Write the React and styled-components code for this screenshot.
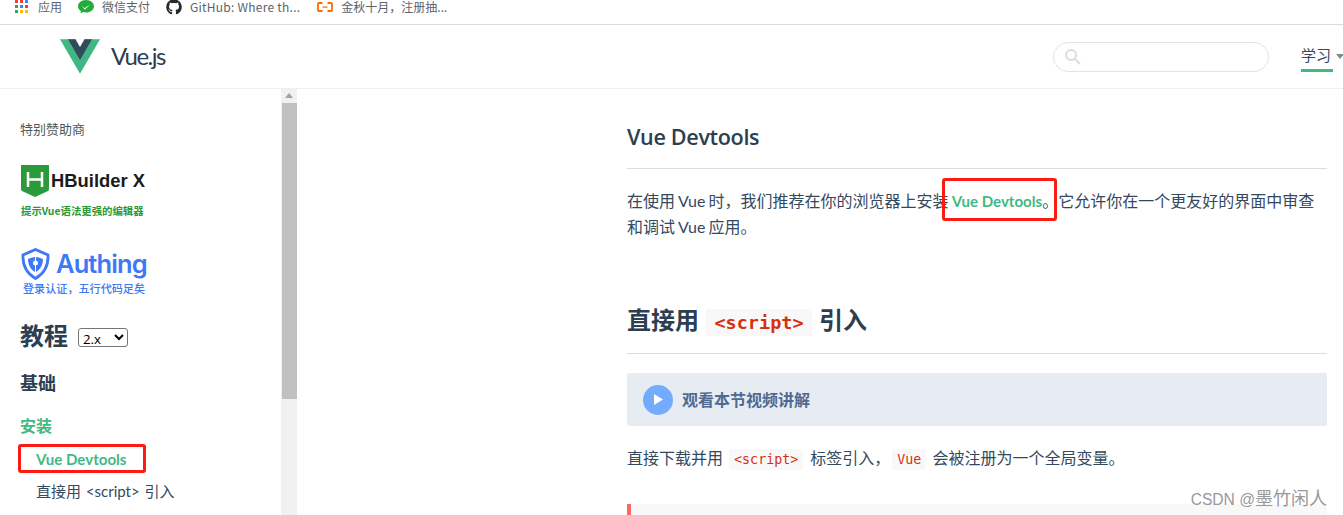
import React from "react";
import styled, { createGlobalStyle } from "styled-components";
import { FaGithub } from "react-icons/fa";

const Global = createGlobalStyle`
  html, body { margin: 0; padding: 0; height: 515px; overflow: hidden; background: #fff; }
  body { font-family: "Open Sans", "Noto Sans CJK SC", sans-serif; color: #2c3e50; }
  #root { height: 515px; }
`;
const Page = styled.div`
  height: 515px; display: flex; flex-direction: column; overflow: hidden; position: relative;
`;
const Bookmarks = styled.div`
  height: 24px; flex: none; display: flex; align-items: flex-start; padding-left: 15px;
  border-bottom: 1px solid #dadce0; box-sizing: content-box;
`;
const Bookmark = styled.div`
  display: flex; align-items: center; gap: ${p => p.$gap || 8}px; margin-right: ${p => p.$mr}px;
  font: 12px/13px "Noto Sans CJK SC", sans-serif; color: #5f6368; white-space: nowrap; height: 13px;
  letter-spacing: ${p => p.$ls || 0}px;
`;
const Header = styled.header`
  height: 64px; flex: none; box-sizing: border-box; border-bottom: 1px solid #f0f0f0;
  display: flex; align-items: center; padding-left: 60px;
`;
const Brand = styled.div`
  display: flex; align-items: center; gap: 11px; font: 400 24px Lato, sans-serif; color: #2c3e50;
  letter-spacing: -1.5px;
`;
const BrandName = styled.span`
  margin-top: -3px;
`;
const Search = styled.div`
  margin-left: auto; width: 216px; height: 30px; box-sizing: border-box; border: 1px solid #e3e3e3;
  border-radius: 15px; display: flex; align-items: center; padding-left: 10px;
`;
const NavItem = styled.div`
  width: 42px; margin-left: 32px; flex: none; font: 15px "Noto Sans CJK SC", sans-serif; position: relative;
  height: 30px; display: flex; align-items: flex-start; white-space: nowrap; overflow: hidden; line-height: 26px;
  color: #34495e;
`;
const Underline = styled.i`
  position: absolute; left: 0; bottom: 0; width: 32px; height: 3px; background: #42b983;
`;
const Caret = styled.i`
  width: 0; height: 0; border: 4px solid transparent; border-top: 5px solid #7f8c8d; border-bottom: 0; margin: 12px 0 0 5px;
`;
const Main = styled.div`
  flex: 1; min-height: 0; display: flex; overflow: hidden;
`;
const Sidebar = styled.aside`
  width: 281px; flex: none; box-sizing: border-box; padding: 32px 0 0 20px; overflow: hidden;
`;
const SponsorLabel = styled.div`
  font: 13px/16px "Noto Sans CJK SC", sans-serif; color: #4f5959;
`;
const SponsorHB = styled.div`
  margin-top: 28px; display: flex; flex-direction: column;
`;
const LogoRow = styled.div`
  display: flex; align-items: center; gap: ${p => p.$gap}px; margin-left: 1px;
`;
const HBName = styled.span`
  font: 700 18.4px/32px "Liberation Sans", sans-serif; color: #1b1b1b;
`;
const Tagline = styled.span`
  font: ${p => p.$w} ${p => p.$s}px/14px "Noto Sans CJK SC", sans-serif; color: ${p => p.$c};
  margin-top: ${p => p.$mt}px; margin-left: ${p => p.$ml || 0}px; white-space: nowrap;
`;
const SponsorAuth = styled.div`
  margin-top: 29px; display: flex; flex-direction: column;
`;
const AuthName = styled.span`
  font: 600 25.5px/34px Inter, sans-serif; color: #3f78f5; letter-spacing: -0.9px;
`;
const TutorialRow = styled.div`
  margin-top: 23px; display: flex; align-items: center; gap: 10px; height: 34px;
`;
const Big = styled.span`
  font: 700 24px/34px "Noto Sans CJK SC", sans-serif; color: #2c3e50;
`;
const Version = styled.select`
  font: 13.3px "Open Sans", sans-serif; width: 50px; height: 19px; padding: 0; margin-top: 4px;
  border: 1px solid #767676; border-radius: 3px; background: #fff; color: #000;
`;
const Sub = styled.div`
  margin-top: 18px; font: 700 18px/24px "Noto Sans CJK SC", sans-serif; color: #2c3e50;
`;
const Active = styled.div`
  margin-top: 20px; font: 700 16px/22px "Noto Sans CJK SC", sans-serif; color: #42b983;
`;
const SideLink = styled.div`
  margin: ${p => p.$mt}px 0 0 16px; position: relative; width: fit-content; line-height: 20px; height: 20px;
  font-family: Lato, "Noto Sans CJK SC", sans-serif;
  font-size: ${p => p.$active ? 15.1 : 15}px; font-weight: ${p => p.$active ? 700 : 400};
  word-spacing: ${p => p.$active ? 0 : 1}px;
  color: ${p => p.$active ? "#42b983" : "#34495e"};
`;
const RedBox = styled.span`
  position: absolute; box-sizing: border-box; border: 3px solid #fb1b10; border-radius: 3px; pointer-events: none;
  left: ${p => p.$l}px; top: ${p => p.$t}px; width: ${p => p.$w}px; height: ${p => p.$h}px;
`;
const Track = styled.div`
  width: 16px; flex: none; background: #f1f1f1; display: flex; flex-direction: column; align-items: center;
`;
const ArrowUp = styled.i`
  margin-top: 4px; width: 0; height: 0; border: 4px solid transparent; border-top: 0; border-bottom: 5px solid #a3a3a3;
`;
const Thumb = styled.div`
  margin-top: 5px; width: 15px; height: 296px; background: #c1c1c1;
`;
const Content = styled.main`
  flex: 1; min-width: 0; box-sizing: border-box; padding: 32px 16px 0 330px; overflow: hidden;
`;
const H3 = styled.h3`
  margin: 0; font: 600 21.6px/32px "Open Sans", "Noto Sans CJK SC", sans-serif; color: #2c3e50;
  letter-spacing: -0.35px; padding-bottom: 15px; border-bottom: 1px solid #ddd;
`;
const Para = styled.p`
  margin: ${p => p.$mt}px 0 0; font: 400 16px/26px Lato, "Noto Sans CJK SC", sans-serif; color: #34495e;
  word-spacing: -1px;
`;
const Link = styled.span`
  color: #42b983; font: 700 15.1px Lato, sans-serif; position: relative; word-spacing: 0;
`;
const H2 = styled.h2`
  margin: 60px 0 0; font: 700 24px/38px "Noto Sans CJK SC", sans-serif; color: #2c3e50;
  padding-bottom: 11px; border-bottom: 1px solid #ddd;
`;
const Code = styled.code`
  font-family: "DejaVu Sans Mono", monospace; font-size: ${p => p.$s}px; font-weight: ${p => p.$b ? 700 : 400};
  background: #f8f8f8; padding: ${p => p.$pad}; border-radius: 2px;
  margin: 0 ${p => p.$mr}px 0 ${p => p.$ml}px; color: #d6300f; word-spacing: 0;
`;
const Video = styled.div`
  margin-top: 19px; height: 53px; background: #e7ecf3; border-radius: 2px; display: flex; align-items: center;
  padding-left: 16px; gap: 9px; font: 700 16px "Noto Sans CJK SC", sans-serif; color: #4f6a92;
`;
const VideoLabel = styled.span`
  margin-top: -2px;
`;
const Play = styled.span`
  width: 30px; height: 30px; border-radius: 50%; background: #73abfe; display: flex; align-items: center; justify-content: center;
`;
const CodeBlock = styled.div`
  margin-top: 31px; height: 60px; background: #f8f8f8; border-left: 4px solid #ff6666;
`;
const Watermark = styled.span`
  position: absolute; right: 16px; top: 486px; font: 18px/22px "Noto Sans CJK SC", sans-serif; color: #999;
`;
const WatermarkLatin = styled.span`
  font: 15.6px/22px "Liberation Sans", sans-serif;
`;

export default function App() {
  return (
    <Page>
      <Global />
      <Bookmarks>
        <Bookmark $gap={10} $mr={16}>
          <svg width="13" height="13" viewBox="0 0 13 13">
            {[["#ea4335","#ea4335","#4285f4"],["#34a853","#4285f4","#ea4335"],["#34a853","#fbbc04","#fbbc04"]].map((r,y)=>r.map((c,x)=>(
              <rect key={x+"-"+y} x={x*5} y={y*5} width="3" height="3" fill={c}/>
            )))}
          </svg>
          应用
        </Bookmark>
        <Bookmark $gap={8} $mr={16}>
          <svg width="16" height="14" viewBox="0 0 16 14">
            <path d="M8 0C3.6 0 0 2.8 0 6.3c0 2 1.2 3.8 3 4.900L2.500 13.500 5 12.100c.9.300 2 .5 3 .5 4.400 0 8-2.800 8-6.300S12.400 0 8 0z" fill="#22ac38"/>
            <path d="M3.800 5.800l2.700 2.400 5.700-3.600-5.500 5.100z" fill="#fff"/>
          </svg>
          微信支付
        </Bookmark>
        <Bookmark $gap={8} $mr={17} $ls={0.24}>
          <FaGithub size={16} color="#24292e" />
          GitHub: Where th...
        </Bookmark>
        <Bookmark $gap={8} $mr={0}>
          <svg width="16" height="10" viewBox="0 0 16 10">
            <path d="M5.500 1H2Q1 1 1 2v6q0 1 1 1h3.500M10.500 1H14q1 0 1 1v6q0 1-1 1h-3.500" fill="none" stroke="#ff6a00" strokeWidth="1.800"/>
            <rect x="5.500" y="4.500" width="5" height="1.200" fill="#ff6a00"/>
          </svg>
          金秋十月，注册抽...
        </Bookmark>
      </Bookmarks>
      <Header>
        <Brand>
          <svg width="40" height="35" viewBox="0 0 196.320 170" >
            <path d="M120.830 0L98.160 39.260 75.490 0H0l98.160 170.020L196.320 0z" fill="#41b883"/>
            <path d="M120.830 0L98.160 39.260 75.490 0H39.260l58.900 102.010L157.060 0z" fill="#34495e"/>
          </svg>
          <BrandName>Vue.js</BrandName>
        </Brand>
        <Search>
          <svg width="17" height="17" viewBox="0 0 17 17" fill="none" stroke="#dcdcdc" strokeWidth="2">
            <circle cx="7" cy="7" r="5"/><path d="M10.500 10.500l5 5" strokeLinecap="round"/>
          </svg>
        </Search>
        <NavItem>学习<Caret /><Underline /></NavItem>
      </Header>
      <Main>
        <Sidebar>
          <SponsorLabel>特别赞助商</SponsorLabel>
          <SponsorHB>
            <LogoRow $gap={2}>
              <svg width="28" height="32" viewBox="0 0 28 32">
                <path d="M0 0h28v24q0 2-2 2.600L14 32 2 26.600Q0 26 0 24z" fill="#2a9a3a"/>
                <path d="M7 7v15M21 7v15M7 14.500h14" stroke="#fff" strokeWidth="2.500" fill="none"/>
              </svg>
              <HBName>HBuilder X</HBName>
            </LogoRow>
            <Tagline $c="#2a9a3a" $w={700} $s={10.400} $mt={7} $ml={1}>提示Vue语法更强的编辑器</Tagline>
          </SponsorHB>
          <SponsorAuth>
            <LogoRow $gap={6}>
              <svg width="29" height="32" viewBox="0 0 29 32" fill="none">
                <path d="M14.500 1.500L27 7c.5 10-3 18-12.500 23.500C5 25 1.500 17 2 7z" stroke="#3f78f5" strokeWidth="2.800"/>
                <path d="M14 9c-5 1-7 2-7 2 0 5 2 10 7 13zM15 9c5 1 7 2 7 2 0 5-2 10-7 13z" fill="#3f78f5"/>
                <circle cx="14.500" cy="15" r="2.500" fill="#fff"/>
              </svg>
              <AuthName>Authing</AuthName>
            </LogoRow>
            <Tagline $c="#3f78f5" $w={500} $s={11.100} $mt={0} $ml={3}>登录认证，五行代码足矣</Tagline>
          </SponsorAuth>
          <TutorialRow>
            <Big>教程</Big>
            <Version defaultValue="2.x"><option>2.x</option></Version>
          </TutorialRow>
          <Sub>基础</Sub>
          <Active>安装</Active>
          <SideLink $mt={13} $active>Vue Devtools<RedBox $l={-18} $t={-5} $w={128} $h={29} /></SideLink>
          <SideLink $mt={12}>直接用 &lt;script&gt; 引入</SideLink>
        </Sidebar>
        <Track><ArrowUp /><Thumb /></Track>
        <Content>
          <H3>Vue Devtools</H3>
          <Para $mt={19}>
            在使用 Vue 时，我们推荐在你的浏览器上安装 <Link>Vue Devtools<RedBox $l={-10} $t={-14} $w={115} $h={43} /></Link>。它允许你在一个更友好的界面中审查和调试 Vue 应用。
          </Para>
          <H2>直接用 <Code $s={18.500} $b $pad="3px 8px" $ml={2} $mr={2}>&lt;script&gt;</Code> 引入</H2>
          <Video>
            <Play><svg width="10" height="11" viewBox="0 0 10 11"><path d="M1 0l9 5.500L1 11z" fill="#fff"/></svg></Play>
            <VideoLabel>观看本节视频讲解</VideoLabel>
          </Video>
          <Para $mt={19}>
            直接下载并用 <Code $s={13.300} $pad="3px 5px" $ml={3} $mr={4}>&lt;script&gt;</Code> 标签引入，<Code $s={13.300} $pad="3px 5px" $ml={2} $mr={3}>Vue</Code> 会被注册为一个全局变量。
          </Para>
          <CodeBlock />
        </Content>
      </Main>
      <Watermark><WatermarkLatin>CSDN @</WatermarkLatin>墨竹闲人</Watermark>
    </Page>
  );
}
